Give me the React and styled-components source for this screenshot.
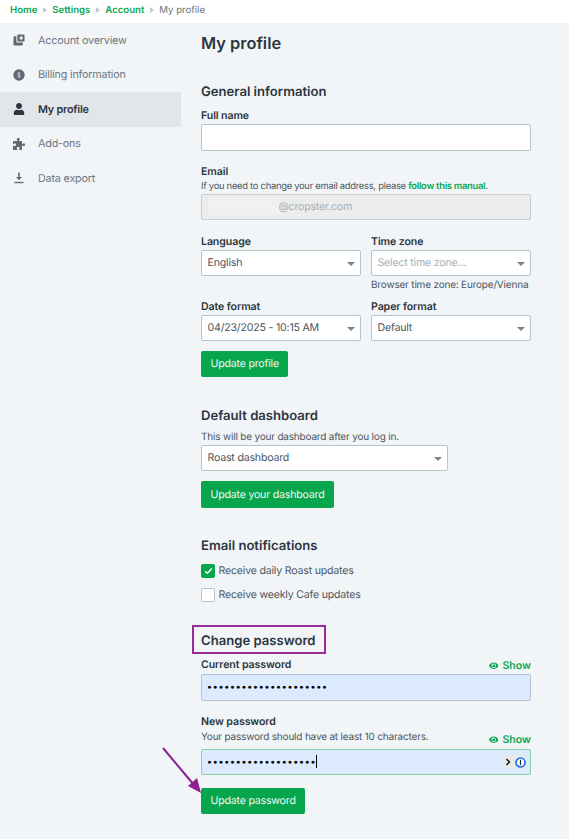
import React from 'react';
import styled, { createGlobalStyle } from 'styled-components';
import { FaUser, FaEye } from 'react-icons/fa';
import { FaPuzzlePiece } from 'react-icons/fa6';

const GlobalStyle = createGlobalStyle`
  html, body {
    margin: 0;
    padding: 0;
    background: #f1f5f7;
    font-family: Inter, "Liberation Sans", sans-serif;
    color: #2d3540;
    text-rendering: geometricPrecision;
    -webkit-font-smoothing: antialiased;
  }
  * { box-sizing: border-box; }
`;

const Page = styled.div`
  width: 569px;
  height: 839px;
  overflow: hidden;
  position: relative;
  background: #f1f5f7;
`;

const Breadcrumb = styled.div`
  height: 23px;
  background: #fff;
  display: flex;
  align-items: center;
  padding: 0 0 3px 10px;
  font-size: 9.6px;
`;

const Crumb = styled.a`
  color: #0aa650;
  font-weight: 600;
`;

const CrumbCurrent = styled.span`
  color: #6b7480;
`;

const CrumbArrow = styled.span`
  width: 0;
  height: 0;
  margin: 0 5.5px;
  border-left: 4px solid #c2cad0;
  border-top: 3.5px solid transparent;
  border-bottom: 3.5px solid transparent;
`;

const Body = styled.div`
  display: flex;
  align-items: flex-start;
`;

const Sidebar = styled.nav`
  width: 181px;
  flex-shrink: 0;
`;

const NavItem = styled.div`
  height: 34.5px;
  display: flex;
  align-items: center;
  gap: 13px;
  padding-left: 13px;
  font-size: 10.8px;
  letter-spacing: -0.2px;
  color: ${p => (p.$active ? '#2d3540' : '#6f7883')};
  font-weight: ${p => (p.$active ? 600 : 400)};
  background: ${p => (p.$active ? '#e0e6e9' : 'transparent')};
`;

const NavIcon = styled.span`
  width: 12px;
  display: flex;
  justify-content: center;
  color: ${p => (p.$active ? '#2d3540' : '#5f6873')};
  font-size: 12px;
`;

const Main = styled.main`
  width: 330px;
  margin-left: 20px;
`;

const PageTitle = styled.h1`
  margin: 10px 0 0;
  font-size: 16.4px;
  line-height: 20px;
  font-weight: 600;
`;

const SectionTitle = styled.h2`
  margin: ${p => p.$top}px 0 0;
  font-size: 13.1px;
  line-height: 18px;
  font-weight: 600;
  position: relative;
`;

const Highlight = styled.span`
  position: absolute;
  left: -9px;
  top: -7px;
  width: 134px;
  height: 29px;
  border: 2px solid #9b2a9b;
  pointer-events: none;
`;

const Label = styled.div`
  margin-top: ${p => p.$top || 0}px;
  margin-bottom: ${p => p.$bottom || 0}px;
  font-size: 10.6px;
  letter-spacing: -0.1px;
  line-height: 14px;
  font-weight: 600;
`;

const Help = styled.div`
  font-size: ${p => (p.$compact ? 9.4 : 10)}px;
  letter-spacing: ${p => (p.$compact ? -0.27 : -0.19)}px;
  line-height: 14px;
  color: #4c5560;
  margin-top: ${p => p.$top || 0}px;
  margin-bottom: ${p => p.$bottom || 0}px;
`;

const HelpLink = styled.a`
  color: #0aa650;
  font-weight: 600;
`;

const Field = styled.div`
  height: ${p => p.$height || 26.5}px;
  margin-top: ${p => p.$top || 0}px;
  width: ${p => p.$width || '100%'};
  display: flex;
  align-items: center;
  padding: 0 5.5px;
  background: ${p => p.$bg || '#fff'};
  border: 1px solid ${p => p.$border || '#b8c4cc'};
  border-radius: 2px;
  font-size: 10.6px;
  letter-spacing: -0.2px;
  color: ${p => (p.$muted ? '#a6aeb6' : '#4c5560')};
  position: relative;
`;

const EmailBlur = styled.span`
  width: 71px;
  height: 17px;
  background: #f1f1f1;
  flex-shrink: 0;
`;

const Caret = styled.span`
  position: absolute;
  right: 5px;
  top: 11px;
  width: 0;
  height: 0;
  border-top: 4px solid #78828c;
  border-left: 4px solid transparent;
  border-right: 4px solid transparent;
`;

const TwoCols = styled.div`
  display: grid;
  grid-template-columns: 160px 160px;
  gap: 10px;
  margin-top: ${p => p.$top || 0}px;
`;

const Button = styled.button`
  display: block;
  margin-top: ${p => p.$top}px;
  height: 26.5px;
  padding: 0 9.5px;
  border: none;
  border-radius: 2px;
  background: #07a64d;
  color: #f1f8f3;
  font-family: inherit;
  font-size: 10.6px;
  letter-spacing: -0.2px;
  text-rendering: geometricPrecision;
`;

const CheckRow = styled.div`
  display: flex;
  align-items: center;
  gap: 3.5px;
  height: 14px;
  margin-top: ${p => p.$top}px;
  font-size: 10.6px;
  letter-spacing: -0.2px;
  color: #4c5560;
`;

const CheckBox = styled.span`
  width: 14px;
  height: 14px;
  border-radius: 2px;
  display: flex;
  align-items: center;
  justify-content: center;
  background: ${p => (p.$checked ? '#07a64d' : '#fff')};
  border: 1px solid ${p => (p.$checked ? '#07a64d' : '#b8c4cc')};
`;

const ShowRow = styled.div`
  display: flex;
  justify-content: space-between;
  align-items: flex-end;
  margin-top: ${p => p.$top || 0}px;
`;

const ShowLink = styled.span`
  display: flex;
  align-items: center;
  gap: 4px;
  color: #0aa650;
  font-size: 10.6px;
  font-weight: 600;
  line-height: 14px;
  svg { font-size: 9.5px; }
`;

const Dots = styled.span`
  color: #000;
  font-size: 11.3px;
  letter-spacing: 1.8px;
  padding-top: 3px;
  font-family: "Liberation Sans", sans-serif;
  line-height: 1;
`;

const TextCursor = styled.span`
  width: 1px;
  height: 13px;
  margin-left: -1px;
  background: #000;
`;

const PasswordManager = styled.span`
  position: absolute;
  right: 3px;
  top: 5.5px;
  width: 25px;
  height: 14px;
  border-radius: 7px;
  background: #e9e9e9;
  display: flex;
  align-items: center;
  justify-content: space-between;
  padding: 0 1px 0 3px;
`;

const ArrowMark = styled.svg`
  position: absolute;
  left: 160px;
  top: 745px;
`;

function OverviewIcon() {
  return (
    <svg width="12" height="12" viewBox="0 0 12 12" fill="#5f6873">
      <path d="M0.5 3.5 Q0.5 2.2 1.8 2.2 H3.4 V8.6 H9.8 V10.2 Q9.8 11.5 8.5 11.5 H1.8 Q0.5 11.5 0.5 10.2 Z" />
      <path d="M4.4 0.5 H10.2 Q11.5 0.5 11.5 1.8 V7.6 H4.4 Z M6.8 2.4 V5.6 H9.6 V2.4 Z" fillRule="evenodd" />
    </svg>
  );
}

function BillingIcon() {
  return (
    <svg width="12" height="12" viewBox="0 0 12 12">
      <circle cx="6" cy="6" r="5.7" fill="#5f6873" />
      <path d="M7.4 4.4 C7.1 3.7 4.8 3.6 4.8 4.8 C4.8 6.1 7.3 5.6 7.3 7.1 C7.3 8.2 5 8.2 4.6 7.4 M6 3 V9" stroke="#d4d8dc" strokeWidth="0.8" fill="none" />
    </svg>
  );
}

function ExportIcon() {
  return (
    <svg width="12" height="12" viewBox="0 0 12 12" fill="#5f6873">
      <path d="M5.2 0.5 H6.8 V5 H9 L6 8.2 L3 5 H5.2 Z" />
      <rect x="1.5" y="9.8" width="9" height="1.4" />
    </svg>
  );
}

const navItems = [
  { label: 'Account overview', icon: <OverviewIcon /> },
  { label: 'Billing information', icon: <BillingIcon /> },
  { label: 'My profile', icon: <FaUser />, active: true },
  { label: 'Add-ons', icon: <FaPuzzlePiece /> },
  { label: 'Data export', icon: <ExportIcon /> },
];

export default function App() {
  return (
    <Page>
      <GlobalStyle />
      <Breadcrumb>
        <Crumb>Home</Crumb>
        <CrumbArrow />
        <Crumb>Settings</Crumb>
        <CrumbArrow />
        <Crumb>Account</Crumb>
        <CrumbArrow />
        <CrumbCurrent>My profile</CrumbCurrent>
      </Breadcrumb>
      <Body>
        <Sidebar>
          {navItems.map(item => (
            <NavItem key={item.label} $active={item.active}>
              <NavIcon $active={item.active}>{item.icon}</NavIcon>
              {item.label}
            </NavItem>
          ))}
        </Sidebar>
        <Main>
          <PageTitle>My profile</PageTitle>

          <SectionTitle $top={30}>General information</SectionTitle>
          <Label $top={8}>Full name</Label>
          <Field $top={1} />
          <Label $top={14}>Email</Label>
          <Help $top={1} $compact>
            If you need to change your email address, please <HelpLink>follow this manual</HelpLink>.
          </Help>
          <Field $bg="#ececec" $border="#c6ced4" $muted>
            <EmailBlur />
            @cropster.com
          </Field>
          <TwoCols $top={15}>
            <div>
              <Label>Language</Label>
              <Field $top={0.5}>English<Caret /></Field>
            </div>
            <div>
              <Label>Time zone</Label>
              <Field $top={0.5} $muted>Select time zone...<Caret /></Field>
              <Help $top={2}>Browser time zone: Europe/Vienna</Help>
            </div>
          </TwoCols>
          <TwoCols $top={8}>
            <div>
              <Label>Date format</Label>
              <Field $top={0.5}>04/23/2025 - 10:15 AM<Caret /></Field>
            </div>
            <div>
              <Label>Paper format</Label>
              <Field $top={0.5}>Default<Caret /></Field>
            </div>
          </TwoCols>
          <Button $top={9.5}>Update profile</Button>

          <SectionTitle $top={29.5}>Default dashboard</SectionTitle>
          <Help $top={5}>This will be your dashboard after you log in.</Help>
          <Field $top={1} $width="247px">Roast dashboard<Caret /></Field>
          <Button $top={10}>Update your dashboard</Button>

          <SectionTitle $top={29}>Email notifications</SectionTitle>
          <CheckRow $top={9}>
            <CheckBox $checked>
              <svg width="9" height="8" viewBox="0 0 9 8">
                <path d="M1.2 4.2 L3.4 6.2 L7.8 1.6" stroke="#fff" strokeWidth="1.5" fill="none" />
              </svg>
            </CheckBox>
            Receive daily Roast updates
          </CheckRow>
          <CheckRow $top={10}>
            <CheckBox />
            Receive weekly Cafe updates
          </CheckRow>

          <SectionTitle $top={30}>
            Change password
            <Highlight />
          </SectionTitle>
          <ShowRow $top={8}>
            <Label $bottom={1}>Current password</Label>
            <ShowLink><FaEye />Show</ShowLink>
          </ShowRow>
          <Field $top={1} $height={27} $bg="#dbebfd" $border="#b2c2d2">
            <Dots>•••••••••••••••••••••</Dots>
          </Field>
          <Label $top={14}>New password</Label>
          <ShowRow $top={1}>
            <Help $bottom={3}>Your password should have at least 10 characters.</Help>
            <ShowLink><FaEye />Show</ShowLink>
          </ShowRow>
          <Field $top={2} $bg="#dbebfd" $border="#84d3a6">
            <Dots>•••••••••••••••••••</Dots>
            <TextCursor />
            <PasswordManager>
              <svg width="6" height="8" viewBox="0 0 6 8">
                <path d="M1.5 1 L4.5 4 L1.5 7" stroke="#111" strokeWidth="1.4" fill="none" />
              </svg>
              <svg width="11" height="11" viewBox="0 0 11 11">
                <circle cx="5.5" cy="5.5" r="4.5" fill="#fff" stroke="#1a73e8" strokeWidth="1.7" />
                <rect x="4.9" y="2.8" width="1.2" height="5.4" fill="#1a2a44" />
              </svg>
            </PasswordManager>
          </Field>
          <Button $top={12.5}>Update password</Button>
        </Main>
      </Body>
      <ArrowMark width="44" height="50" viewBox="0 0 44 50">
        <path d="M3 3 L34 40" stroke="#8f1f8f" strokeWidth="2" fill="none" />
        <path d="M41 48 L28 41 L37 33 Z" fill="#8f1f8f" />
      </ArrowMark>
    </Page>
  );
}
